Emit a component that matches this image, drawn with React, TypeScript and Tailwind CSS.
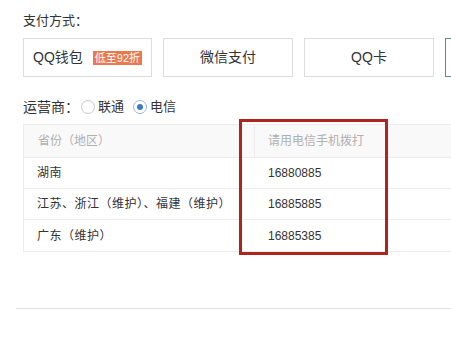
import React from "react";

const font = {
  fontFamily: '"Liberation Sans", "Noto Sans CJK SC", sans-serif',
};

const rows = [
  { area: "湖南", phone: "16880885" },
  { area: "江苏、浙江（维护）、福建（维护）", phone: "16885885" },
  { area: "广东（维护）", phone: "16885385" },
];

function Radio({ checked, label }: { checked?: boolean; label: string }) {
  return (
    <label className="flex items-center gap-[3px]">
      <span
        className={
          "flex h-[14px] w-[14px] items-center justify-center rounded-full border " +
          (checked ? "border-[#9bb7d4]" : "border-[#c8c8c8]")
        }
      >
        {checked && <span className="h-[6px] w-[6px] rounded-full bg-[#3d7cc4]" />}
      </span>
      <span>{label}</span>
    </label>
  );
}

export default function App() {
  return (
    <div
      className="relative h-[354px] w-[451px] overflow-hidden bg-white text-[13px] text-[#333]"
      style={font}
    >
      <div className="pl-[23px] pt-[12px]">
        <div className="leading-[18px]">支付方式：</div>
        <div className="mt-[8px] flex gap-[11px] text-[14px]">
          <div className="flex h-[39px] w-[129px] shrink-0 items-center border border-[#dcdcdc] pl-[9px]">
            <span>QQ钱包</span>
            <span className="ml-[10px] bg-[#e9794f] px-[2px] text-[11px] leading-[14px] text-white">
              低至92折
            </span>
          </div>
          <div className="flex h-[39px] w-[130px] shrink-0 items-center justify-center border border-[#dcdcdc]">
            微信支付
          </div>
          <div className="flex h-[39px] w-[130px] shrink-0 items-center justify-center border border-[#dcdcdc]">
            QQ卡
          </div>
          <div className="h-[39px] w-[130px] shrink-0 border border-[#5a8a96]" />
        </div>

        <div className="mt-[21px] flex items-center gap-[2px] leading-[18px]">
          <span className="text-[14px]">运营商：</span>
          <Radio label="联通" />
          <span className="w-[5px]" />
          <Radio checked label="电信" />
        </div>

        <div className="mt-[8px] w-[440px] border border-[#ececec] text-[12px]">
          <div className="flex h-[33px] items-center border-b border-[#ececec] bg-[#f9f9f9] text-[#b0b0b0]">
            <div className="w-[230px] pl-[14px]">省份（地区）</div>
            <div className="h-full border-l border-[#ececec]" />
            <div className="pl-[13px]">请用电信手机拨打</div>
          </div>
          {rows.map((r, i) => (
            <div
              key={r.phone}
              className={
                "flex h-[31px] items-center " +
                (i < rows.length - 1 ? "border-b border-[#ececec]" : "")
              }
            >
              <div className="w-[231px] pl-[13px] tracking-[0.5px]">{r.area}</div>
              <div className="pl-[13px]">{r.phone}</div>
            </div>
          ))}
        </div>
      </div>

      <div className="mt-[56px] ml-[16px] border-t border-[#e2e2e2]" />

      {/* annotation frame around the dial-number column */}
      <div className="pointer-events-none absolute left-[239px] top-[119px] h-[136px] w-[149px] border-[3px] border-[#b0241f]" />
    </div>
  );
}
